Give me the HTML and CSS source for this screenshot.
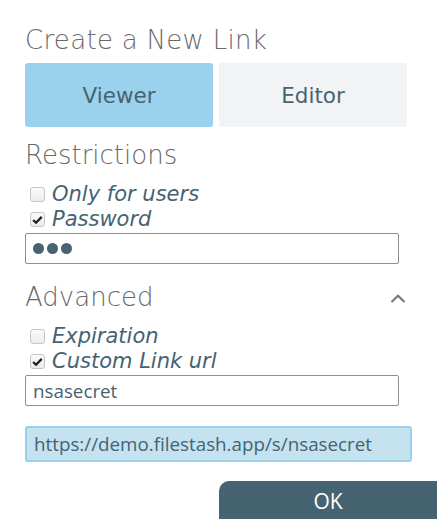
FILE: index.html
```html
<!DOCTYPE html>
<html>
<head>
<meta charset="utf-8">
<link rel="stylesheet" href="styles.css">
</head>
<body>
<div class="dialog">
  <h2 class="title">Create a New Link</h2>
  <div class="roles">
    <div class="role active">Viewer</div>
    <div class="role">Editor</div>
  </div>
  <h3 class="section first">Restrictions</h3>
  <label class="check first"><span class="box"></span><span class="lbl">Only for users</span></label>
  <label class="check"><span class="box on"><svg viewBox="0 0 16 16" width="14" height="14"><path d="M2.6 8l3.6 3.4 7-7.2" fill="none" stroke="#1e1e1e" stroke-width="2.8"/></svg></span><span class="lbl">Password</span></label>
  <div class="input pw"><span class="dot"></span><span class="dot"></span><span class="dot"></span></div>
  <div class="adv-head">
    <h3 class="section">Advanced</h3>
    <svg class="chev" viewBox="0 0 16 9" width="16" height="9"><path d="M1.5 8L8 1.8 14.5 8" fill="none" stroke="#777" stroke-width="2.2"/></svg>
  </div>
  <label class="check first"><span class="box"></span><span class="lbl">Expiration</span></label>
  <label class="check"><span class="box on"><svg viewBox="0 0 16 16" width="14" height="14"><path d="M2.6 8l3.6 3.4 7-7.2" fill="none" stroke="#1e1e1e" stroke-width="2.8"/></svg></span><span class="lbl">Custom Link url</span></label>
  <div class="input">nsasecret</div>
  <div class="link">https://demo.filestash.app/s/nsasecret</div>
  <div class="footer"><div class="ok">OK</div></div>
</div>
</body>
</html>
```
FILE: styles.css
```css
html, body { margin: 0; padding: 0; background: #fff; }
body { width: 437px; height: 519px; overflow: hidden; font-family: "DejaVu Sans", sans-serif; }
.dialog { padding: 25px 0 0 25px; display: flex; flex-direction: column; }
.title { margin: 0; font-weight: 200; font-size: 26px; line-height: 30px; color: #6a6a6a; letter-spacing: 0.3px; }
.roles { display: flex; gap: 6px; width: 382px; margin-top: 8px; }
.role { flex: 1; height: 64px; border-radius: 3px; background: #f2f3f5; color: #466372; font-size: 21.5px; display: flex; align-items: center; justify-content: center; }
.role.active { background: #9ad1ed; }
.section { margin: 0; font-weight: 200; font-size: 26px; line-height: 30px; color: #6a6a6a; }
.section.first { margin-top: 13px; }
.check { display: flex; align-items: center; height: 25px; line-height: 25px; padding-left: 5px; gap: 7px; }
.check.first { margin-top: 12px; }
.box { box-sizing: border-box; width: 15px; height: 15px; border: 1px solid #c6c6c6; border-radius: 3px; background: linear-gradient(#fafafa, #ececec); display: flex; align-items: center; justify-content: center; }
.lbl { font-style: italic; font-size: 21px; color: #466372; }
.input { box-sizing: border-box; width: 374px; height: 31px; border: 1px solid #8e8e8e; border-radius: 2px; display: flex; align-items: center; padding-left: 7px; font-family: "Open Sans", sans-serif; font-size: 18.8px; color: #466372; margin-top: 1px; }
.pw { gap: 3px; }
.dot { width: 11px; height: 11px; border-radius: 50%; background: #466372; }
.adv-head { display: flex; justify-content: space-between; align-items: center; width: 382px; margin-top: 18px; }
.chev { margin-right: 1px; margin-top: 2px; }
.link { box-sizing: border-box; width: 387px; height: 36px; margin-top: 20px; background: #c4e2f0; border: 2px solid #9ad1ed; border-radius: 3px; display: flex; align-items: center; padding-left: 7px; font-family: "Open Sans", sans-serif; font-size: 18.8px; color: #466372; }
.footer { display: flex; justify-content: flex-end; margin-top: 19px; }
.ok { width: 218px; height: 40px; background: #466372; border-top-left-radius: 10px; color: #fff; font-family: "Open Sans", sans-serif; font-size: 21px; display: flex; align-items: center; justify-content: center; }
```
